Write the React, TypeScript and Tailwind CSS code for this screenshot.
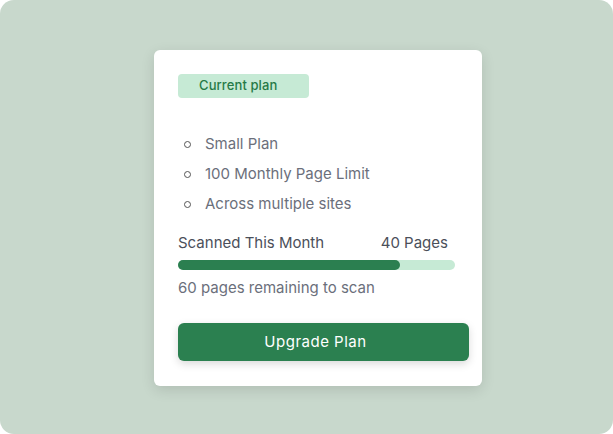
import React from "react";

export default function App() {
  const items = ["Small Plan", "100 Monthly Page Limit", "Across multiple sites"];
  return (
    <div className="w-[613px] h-[434px] bg-white" style={{ fontFamily: "Inter, 'Open Sans', sans-serif" }}>
      <div className="w-full h-full bg-[#c8d8cc] rounded-[14px] flex items-start pt-[50px] pl-[154px]">
        <div className="w-[328px] h-[336px] bg-white rounded-[6px] shadow-[0_4px_14px_rgba(0,0,0,0.12)] pl-[24px] pt-[24px]">
          <div className="w-[131px] h-[24px] rounded-[4px] bg-[#c6ead5] flex items-center pl-[21px] text-[13px] font-medium text-[#277a47] tracking-[0.1px]">
            Current plan
          </div>
          <ul className="mt-[37px] flex flex-col gap-[12px]">
            {items.map((t) => (
              <li key={t} className="flex items-center h-[18px] text-[15px] text-[#6b6f7b]">
                <span className="w-[7px] h-[7px] rounded-full border-[1.5px] border-[#555] ml-[6px] mr-[14px]" />
                {t}
              </li>
            ))}
          </ul>
          <div className="mt-[21px] w-[270px] flex justify-between text-[15px] text-[#4b4f5a] leading-[18px]">
            <span>Scanned This Month</span>
            <span>40 Pages</span>
          </div>
          <div className="mt-[8px] w-[277px] h-[10px] rounded-full bg-[#c6ead5]">
            <div className="h-full rounded-full bg-[#2b7f50]" style={{ width: "80%" }} />
          </div>
          <div className="mt-[9px] text-[15px] text-[#6b6f7b] leading-[18px]">60 pages remaining to scan</div>
          <button className="mt-[26px] w-[291px] h-[38px] rounded-[6px] bg-[#2b8050] text-white text-[15px] font-normal tracking-[0.5px] pr-[16px] shadow-[0_3px_8px_rgba(0,0,0,0.15)]">
            Upgrade Plan
          </button>
        </div>
      </div>
    </div>
  );
}
